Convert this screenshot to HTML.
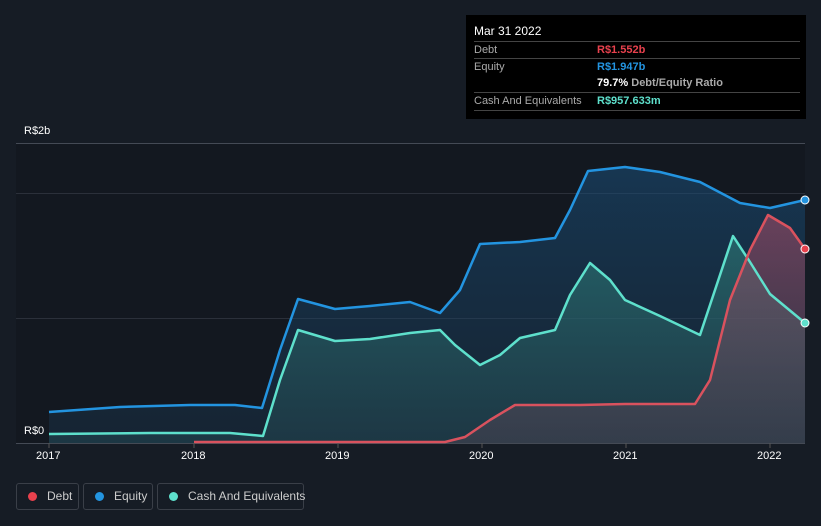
<!DOCTYPE html>
<html><head><style>
body{margin:0;background:#161c25;width:821px;height:526px;overflow:hidden;font-family:"Liberation Sans",sans-serif;position:relative}
.tip{position:absolute;left:466px;top:15px;width:340px;height:104px;background:#000;color:#fff;font-size:11px}
.row{position:absolute;left:8px;right:6px;border-top:1px solid #444;height:18px;line-height:17px}
.lab{color:#aaa;position:absolute;left:0}
.val{position:absolute;left:123px;font-weight:bold;white-space:nowrap}
.ax{position:absolute;color:#fff;font-size:11px}
.leg{position:absolute;top:483px;height:27px;border:1px solid #3a3f48;border-radius:3px;color:#ccc;font-size:12px;line-height:25px;box-sizing:border-box;white-space:nowrap}
.dot{display:inline-block;width:9px;height:9px;border-radius:50%;margin:0 10px 0 11px;vertical-align:-1px}
</style></head><body>
<svg width="821" height="526" style="position:absolute;left:0;top:0">
<defs>
<linearGradient id="ge" x1="0" y1="0" x2="0" y2="1"><stop offset="0" stop-color="#1a4f7a" stop-opacity=".55"/><stop offset="1" stop-color="#1a3a55" stop-opacity=".35"/></linearGradient>
<linearGradient id="gc" x1="0" y1="0" x2="0" y2="1"><stop offset="0" stop-color="#2e7f7a" stop-opacity=".6"/><stop offset="1" stop-color="#244a55" stop-opacity=".5"/></linearGradient>
<linearGradient id="gd" x1="0" y1="0" x2="0" y2="1"><stop offset="0" stop-color="#a04a66" stop-opacity=".6"/><stop offset="1" stop-color="#6a4a5a" stop-opacity=".3"/></linearGradient>
</defs>
<rect x="16" y="143" width="789" height="300" fill="#131820"/>
<line x1="16" y1="143.5" x2="805" y2="143.5" stroke="#444a55"/>
<line x1="16" y1="193.5" x2="805" y2="193.5" stroke="#2b303a"/>
<line x1="16" y1="318.5" x2="805" y2="318.5" stroke="#2b303a"/>
<line x1="16" y1="443.5" x2="805" y2="443.5" stroke="#444a55"/>
<path d="M49,412 L120,407 190,405 235,405 262,408 L280,350 298,299 335,309 370,306 410,302 440,313 460,290 480,244 520,242 555,238 570,210 588,171 625,167 660,172 700,182 740,203 770,208 805,200 L805,443 49,443Z" fill="url(#ge)"/>
<path d="M49,434 L150,433 230,433 263,436 280,380 298,330 335,341 370,339 410,333 440,330 455,345 480,365 500,355 520,338 555,330 570,295 590,263 610,280 625,300 660,316 700,335 715,290 733,236 750,262 770,294 805,323 L805,443 49,443Z" fill="url(#gc)"/>
<path d="M194,442 L445,442 465,437 490,420 515,405 580,405 625,404 695,404 710,380 730,300 750,250 768,215 790,228 805,249 L805,443 194,443Z" fill="url(#gd)"/>
<g fill="none" stroke-width="2.5" stroke-linejoin="round">
<path d="M49,412 L120,407 190,405 235,405 262,408 L280,350 298,299 335,309 370,306 410,302 440,313 460,290 480,244 520,242 555,238 570,210 588,171 625,167 660,172 700,182 740,203 770,208 805,200" stroke="#2394e0"/>
<path d="M49,434 L150,433 230,433 263,436 280,380 298,330 335,341 370,339 410,333 440,330 455,345 480,365 500,355 520,338 555,330 570,295 590,263 610,280 625,300 660,316 700,335 715,290 733,236 750,262 770,294 805,323" stroke="#5ee0cc"/>
<path d="M194,442 L445,442 465,437 490,420 515,405 580,405 625,404 695,404 710,380 730,300 750,250 768,215 790,228 805,249" stroke="#d9525e"/>
</g>
<circle cx="805" cy="200" r="4" fill="#2394e0" stroke="#fff" stroke-width="1"/>
<circle cx="805" cy="249" r="4" fill="#e8414d" stroke="#fff" stroke-width="1"/>
<circle cx="805" cy="323" r="4" fill="#5ee0cc" stroke="#fff" stroke-width="1"/>
<g stroke="#555" ><line x1="49" y1="443" x2="49" y2="448"/><line x1="194" y1="443" x2="194" y2="448"/><line x1="338" y1="443" x2="338" y2="448"/><line x1="482" y1="443" x2="482" y2="448"/><line x1="626" y1="443" x2="626" y2="448"/><line x1="770" y1="443" x2="770" y2="448"/></g>
</svg>
<div class="ax" style="left:24px;top:125px">R$2b</div>
<div class="ax" style="left:24px;top:425px">R$0</div>
<div class="ax" style="left:36px;top:450px">2017</div>
<div class="ax" style="left:181px;top:450px">2018</div>
<div class="ax" style="left:325px;top:450px">2019</div>
<div class="ax" style="left:469px;top:450px">2020</div>
<div class="ax" style="left:613px;top:450px">2021</div>
<div class="ax" style="left:757px;top:450px">2022</div>
<div class="tip">
<div style="position:absolute;left:8px;top:9px;font-size:12px">Mar 31 2022</div>
<div class="row" style="top:26px"><span class="lab">Debt</span><span class="val" style="color:#e8414d">R$1.552b</span></div>
<div class="row" style="top:43px"><span class="lab">Equity</span><span class="val" style="color:#2394e0">R$1.947b</span></div>
<div class="row" style="top:60px;border-top:none"><span class="val">79.7% <span style="color:#aaa">Debt/Equity Ratio</span></span></div>
<div class="row" style="top:77px"><span class="lab">Cash And Equivalents</span><span class="val" style="color:#5ee0cc">R$957.633m</span></div>
<div class="row" style="top:95px;height:0"></div>
</div>
<div class="leg" style="left:16px;width:63px"><span class="dot" style="background:#e8414d"></span>Debt</div>
<div class="leg" style="left:83px;width:70px"><span class="dot" style="background:#2394e0"></span>Equity</div>
<div class="leg" style="left:157px;width:147px"><span class="dot" style="background:#5ee0cc"></span>Cash And Equivalents</div>
</body></html>
